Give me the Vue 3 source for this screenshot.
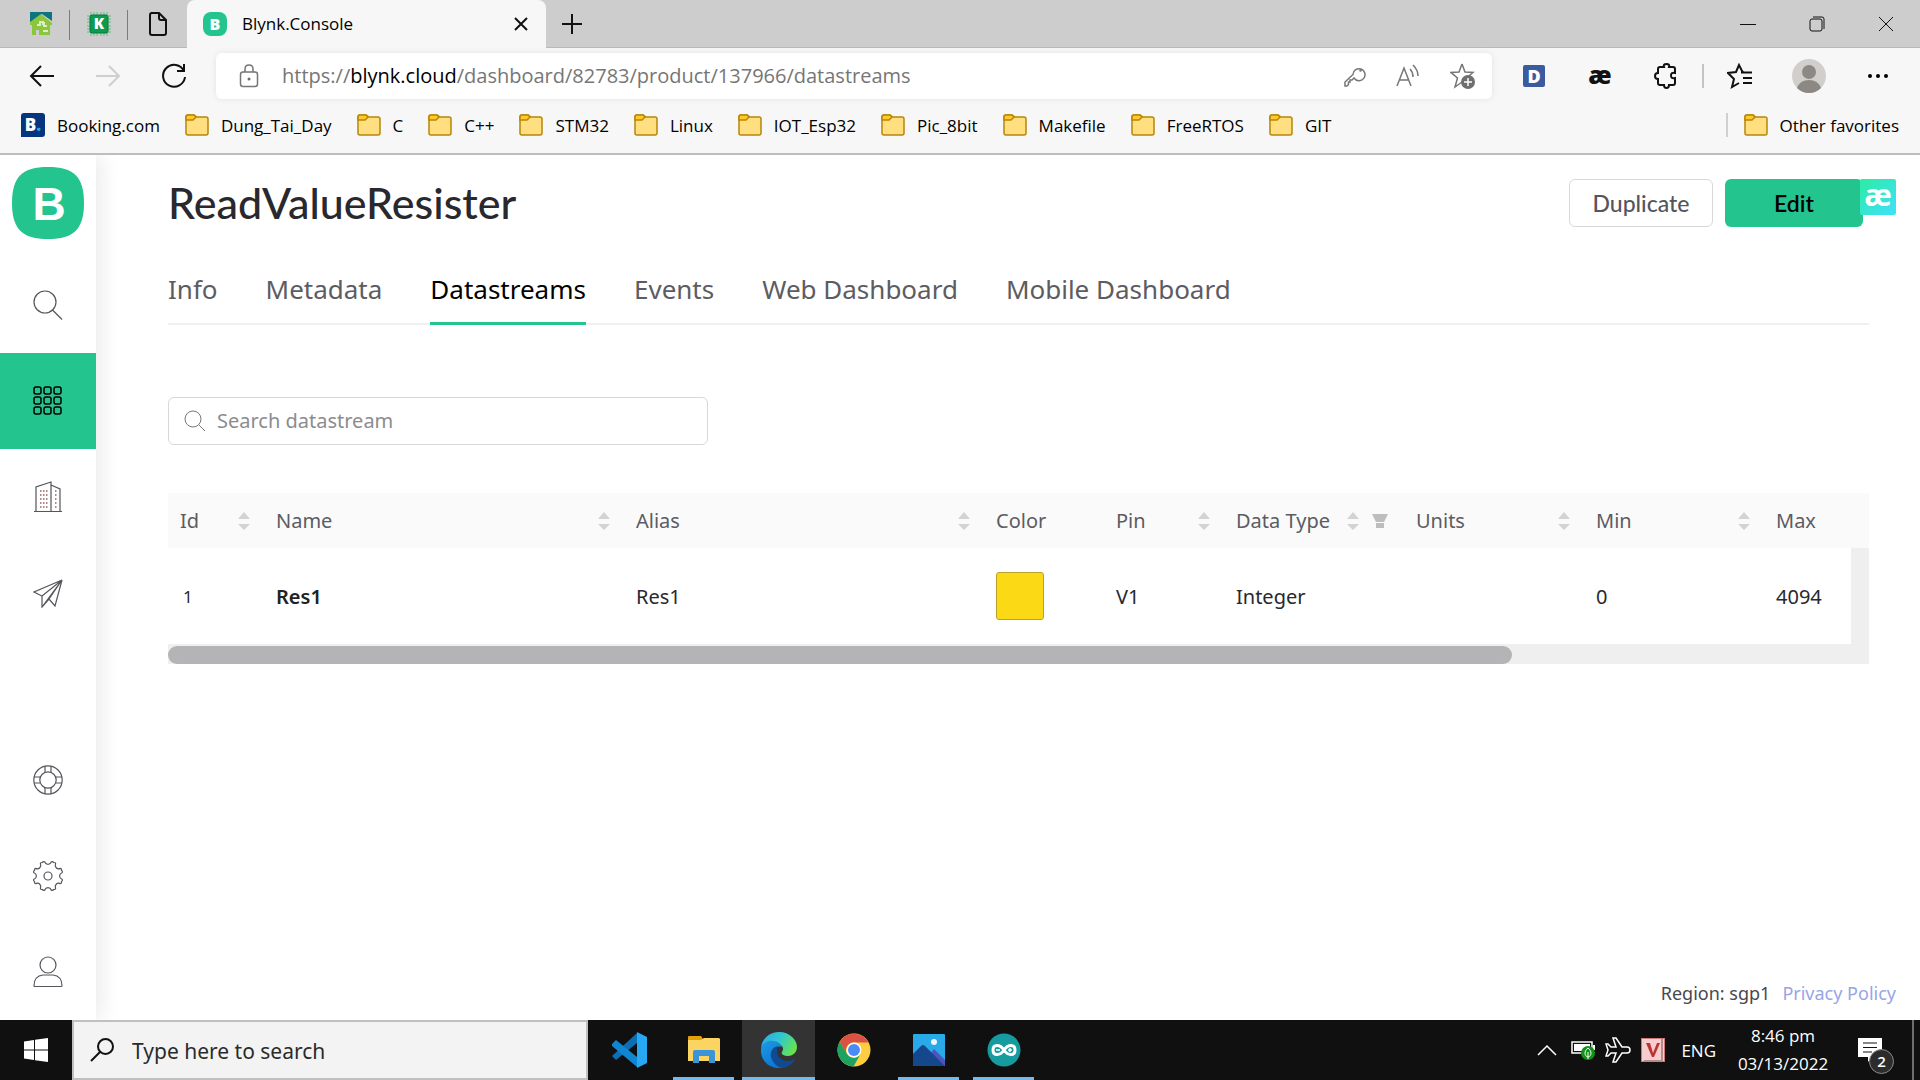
<script setup>
import { ref } from 'vue'

const bookmarks = ['Dung_Tai_Day', 'C', 'C++', 'STM32', 'Linux', 'IOT_Esp32', 'Pic_8bit', 'Makefile', 'FreeRTOS', 'GIT']
const tabs = ['Info', 'Metadata', 'Datastreams', 'Events', 'Web Dashboard', 'Mobile Dashboard']
const activeTab = ref('Datastreams')
const query = ref('')
const taskQuery = ref('')

const columns = [
  { name: 'Id', cls: 'c-id', sort: true },
  { name: 'Name', cls: 'c-wide', sort: true },
  { name: 'Alias', cls: 'c-wide', sort: true },
  { name: 'Color', cls: 'c-small' },
  { name: 'Pin', cls: 'c-small', sort: true },
  { name: 'Data Type', cls: 'c-mid', sort: true, filter: true },
  { name: 'Units', cls: 'c-mid', sort: true },
  { name: 'Min', cls: 'c-mid', sort: true },
  { name: 'Max', cls: 'c-last', span: 2 }
]
const rows = [{ id: 1, name: 'Res1', alias: 'Res1', color: '#fbda15', pin: 'V1', type: 'Integer', units: '', min: 0, max: 4094 }]
const offsets = [0, 10, 20]

// Eight-toothed gear outline, built around the centre of a 32x32 box
const polar = (deg, r) => {
  const a = (deg * Math.PI) / 180
  return `${(16 + r * Math.sin(a)).toFixed(2)} ${(16 - r * Math.cos(a)).toFixed(2)}`
}
const gear = Array.from({ length: 8 }, (_, i) => i * 45)
  .map((a, i) => `${i ? 'L' : 'M'}${polar(a - 13, 14.4)}C${polar(a - 11, 11)} ${polar(a + 11, 11)} ${polar(a + 13, 14.4)}Q${polar(a + 16, 15.6)} ${polar(a + 22.5, 14.6)}Q${polar(a + 29, 15.6)} ${polar(a + 32, 14.4)}`)
  .join('') + 'Z'
</script>

<template>
  <div class="screen">
    <header class="browser">
      <div class="strip">
        <button class="pinned" aria-label="Home site">
          <svg width="22" height="24" viewBox="0 0 22 24"><path d="M0 0h22v9L12 2 0 11z" fill="#0e7480" /><path d="M0 10 11 2l11 9v2h-2v10H9v-5H6v5H2V13H0z" fill="#8cc63f" /><path d="M7 13h3v-3h3v3M13 19h5M14 10v4h3" fill="none" stroke="#d9efc0" stroke-width="2" /></svg>
        </button>
        <button class="pinned" aria-label="K site">
          <svg width="24" height="24" viewBox="0 0 24 24"><path d="M4 0v24M7 0v24M10 0v24M14 0v24M17 0v24M20 0v24M0 4h24M0 7h24M0 10h24M0 14h24M0 17h24M0 20h24" stroke="#5fbf85" stroke-width="1" /><rect x="3" y="3" width="18" height="18" rx="2" fill="#0c9c4c" stroke="#087a3b" /><text x="12" y="17" text-anchor="middle" class="glyph" font-size="15" fill="#fff">K</text></svg>
        </button>
        <button class="pinned last" aria-label="New page">
          <svg width="20" height="26" viewBox="0 0 20 26"><path d="M3 2h8l7 7v13q0 2-2 2H4q-2 0-2-2V4q0-2 2-2M11 2v5q0 2 2 2h5" class="ink" stroke-width="2" /></svg>
        </button>
        <div class="tab">
          <svg width="24" height="24" viewBox="0 0 24 24"><rect width="24" height="24" rx="8" fill="#24c48e" /><text x="12" y="18" text-anchor="middle" class="glyph" font-size="16" fill="#fff">B</text></svg>
          <span class="tab-title">Blynk.Console</span>
          <button class="plain" aria-label="Close tab"><svg width="14" height="14" viewBox="0 0 14 14"><path d="m1 1 12 12M13 1 1 13" class="ink" stroke-width="2" /></svg></button>
        </div>
        <button class="plain new-tab" aria-label="New tab"><svg width="22" height="22" viewBox="0 0 22 22"><path d="M11 1v20M1 11h20" class="ink" stroke-width="2" /></svg></button>
        <div class="window-controls">
          <button aria-label="Minimize"><svg width="16" height="16" viewBox="0 0 16 16"><path d="M0 8.500h16" class="ink" /></svg></button>
          <button aria-label="Restore"><svg width="16" height="16" viewBox="0 0 16 16"><rect x="1" y="3" width="12" height="12" rx="2" class="ink" /><path d="M4 1h9q2 0 2 2v10" class="ink" /></svg></button>
          <button aria-label="Close"><svg width="16" height="16" viewBox="0 0 16 16"><path d="m1 1 14 14M15 1 1 15" class="ink" /></svg></button>
        </div>
      </div>

      <div class="toolbar">
        <button class="tool" aria-label="Back"><svg width="26" height="24" viewBox="0 0 26 24"><path d="M12 2 2 12l10 10M2 12h23" class="ink" stroke-width="2" /></svg></button>
        <button class="tool" aria-label="Forward"><svg width="26" height="24" viewBox="0 0 26 24"><path d="m14 2 10 10-10 10M24 12H1" fill="none" stroke="#cfcfcf" stroke-width="2" /></svg></button>
        <button class="tool" aria-label="Reload"><svg width="26" height="26" viewBox="0 0 26 26"><path d="M23 8A11 11 0 1 0 24 14M23 1v7h-7" class="ink" stroke-width="2" /></svg></button>
        <div class="address">
          <svg width="20" height="24" viewBox="0 0 20 24"><rect x="1.500" y="8" width="17" height="14.500" rx="2.500" class="soft" /><path d="M6 8V5q0-4 4-4t4 4v3" class="soft" /><circle cx="10" cy="15" r="1.500" fill="#6b6b6b" /></svg>
          <div class="url" role="textbox" aria-label="Address">https://<b>blynk.cloud</b>/dashboard/82783/product/137966/datastreams</div>
          <button class="plain" aria-label="Passwords"><svg width="22" height="22" viewBox="0 0 22 22"><path d="M10 13 8 15H6v2H4.500v2.500L3 21H1v-4l8-7.500a6 6 0 1 1 1 3.500z" class="soft" /><circle cx="16.500" cy="5.500" r="1.200" fill="#767676" /></svg></button>
          <button class="plain" aria-label="Read aloud"><svg width="24" height="24" viewBox="0 0 24 24"><path d="M1 22 8 4l7 18M4 16h8M14 5q3 3 3 8M17 1q5 5 5 11" class="soft" /></svg></button>
          <button class="plain" aria-label="Add favorite"><svg width="26" height="26" viewBox="0 0 26 26"><path d="m12 1 3 8 8 .500-6 5M12 1 9 9l-8 .500 6.500 5.500L5 24l7-5" class="soft" /><circle cx="18" cy="19" r="7" fill="#6f6f6f" /><path d="M18 15v8M14 19h8" stroke="#fff" stroke-width="1.500" /></svg></button>
        </div>
        <button class="tool" aria-label="Dictionary"><span class="ext-d">D</span></button>
        <button class="tool" aria-label="Ae extension"><span class="ext-ae">æ</span></button>
        <button class="tool" aria-label="Extensions"><svg width="24" height="26" viewBox="0 0 24 26"><path d="M6 4h4q-1-3 2.500-3T15 4h4q2 0 2 2v4q-4-1-4 2.500t4 2.500v5q0 2-2 2h-4q0 3-2.500 3T10 22H6q-2 0-2-2v-4q-3 0-3-3t3-3V6q0-2 2-2z" class="ink" stroke-width="2" /></svg></button>
        <i class="tool-sep"></i>
        <div class="tool-group">
          <button class="tool" aria-label="Favorites"><svg width="26" height="26" viewBox="0 0 26 26"><path d="m16 9-1-1-3-6-3 7-8 1 6 6-2 8 7-4M14 9.500h11M16 15h9M16 20h9" class="ink" stroke-width="2" /></svg></button>
          <button class="tool" aria-label="Profile"><svg width="34" height="34" viewBox="0 0 34 34"><circle cx="17" cy="17" r="17" fill="#d1cfcb" /><circle cx="17" cy="13" r="7" fill="#8c8985" /><path d="M5 29q3-8 12-8t12 8q-5 5-12 5T5 29z" fill="#8c8985" /></svg></button>
          <button class="tool" aria-label="More"><svg width="22" height="6" viewBox="0 0 22 6"><circle cx="3" cy="3" r="2" /><circle cx="11" cy="3" r="2" /><circle cx="19" cy="3" r="2" /></svg></button>
        </div>
      </div>

      <nav class="bookmarks">
        <a href="#"><svg width="24" height="24" viewBox="0 0 24 24"><path d="M3 0h18q3 0 3 3v18q0 3-3 3H0V3q0-3 3-3z" fill="#06357f" /><text x="12" y="18" text-anchor="middle" class="glyph" font-size="17" fill="#fff">B<tspan fill="#2fa4e7">.</tspan></text></svg>Booking.com</a>
        <a v-for="b in bookmarks" :key="b" href="#"><svg class="folder" width="24" height="24" viewBox="0 0 24 24"><path d="M1 4q0-2 2-2h6l3 2h9q2 0 2 2v14q0 2-2 2H3q-2 0-2-2z" fill="#ffdf80" stroke="#b8860b" stroke-width="1.500" /><path d="M1 4q0-2 2-2h6l2 2-3 3H1z" fill="#ffc928" stroke="#b8860b" stroke-width="1.500" /></svg>{{ b }}</a>
        <a href="#" class="other"><svg class="folder" width="24" height="24" viewBox="0 0 24 24"><path d="M1 4q0-2 2-2h6l3 2h9q2 0 2 2v14q0 2-2 2H3q-2 0-2-2z" fill="#ffdf80" stroke="#b8860b" stroke-width="1.500" /><path d="M1 4q0-2 2-2h6l2 2-3 3H1z" fill="#ffc928" stroke="#b8860b" stroke-width="1.500" /></svg>Other favorites</a>
      </nav>
    </header>

    <div class="page">
      <aside class="sidebar">
        <a href="#" class="logo" aria-label="Blynk"><svg width="72" height="72" viewBox="0 0 72 72"><path d="M36 0C62 0 72 10 72 36S62 72 36 72 0 62 0 36 10 0 36 0z" fill="#24c48e" /><text x="37" y="53" text-anchor="middle" class="logo-letter" font-size="46" fill="#fff">B</text></svg></a>
        <a href="#" class="side" aria-label="Search"><svg width="30" height="30" viewBox="0 0 30 30"><circle cx="12" cy="12" r="11" class="line" /><path d="m19.500 20 9.500 9.500" class="line" /></svg></a>
        <a href="#" class="side active" aria-label="Templates"><svg width="30" height="30" viewBox="0 0 30 30"><template v-for="x in offsets" :key="x"><rect v-for="y in offsets" :key="y" :x="x + 1" :y="y + 1" width="7" height="7" rx="2" fill="none" stroke="#000" stroke-width="1.500" /></template></svg></a>
        <a href="#" class="side" aria-label="Organization"><svg width="30" height="32" viewBox="0 0 30 32"><path d="M1 30.500h28M3 30V6l15-5v29M18 4l9 4v22" class="line" /><path d="M7 10h9M7 14h9M7 18h9M7 22h9M7 26h9M22 10h3M22 14h3M22 18h3M22 22h3M22 26h3" fill="none" stroke="#96615f" stroke-width="1.500" stroke-dasharray="1.500 1.500" /></svg></a>
        <a href="#" class="side" aria-label="Locations"><svg width="30" height="30" viewBox="0 0 30 30"><path d="M29 2 1 14l8 4v11L29 2 9 18M29 2l-7 26-6-7-7 8M16 21 29 2" class="line" /></svg></a>
        <a href="#" class="side push" aria-label="Help"><svg width="30" height="30" viewBox="0 0 30 30"><circle cx="15" cy="15" r="14.200" class="line" /><circle cx="15" cy="15" r="8.200" class="line" /><path d="M12 1v6M18 1v6M12 23v6M18 23v6M1 12h6M1 18h6M23 12h6M23 18h6" class="line" /></svg></a>
        <a href="#" class="side" aria-label="Settings"><svg width="32" height="32" viewBox="0 0 32 32"><path :d="gear" class="line" /><circle cx="16" cy="16" r="4" class="line" /></svg></a>
        <a href="#" class="side" aria-label="Account"><svg width="30" height="32" viewBox="0 0 30 32"><circle cx="15" cy="9" r="8" class="line" /><path d="M1 30q0-10 9-11h10q9 1 9 11 0 .500-1 .500H2q-1 0-1-.500z" class="line" /></svg></a>
      </aside>

      <main class="content">
        <div class="head">
          <h1>ReadValueResister</h1>
          <button class="btn duplicate">Duplicate</button>
          <button class="btn edit">Edit<span class="ae">æ</span></button>
        </div>
        <nav class="tabs">
          <button v-for="t in tabs" :key="t" :class="{ on: t === activeTab }" @click="activeTab = t">{{ t }}</button>
        </nav>
        <label class="search">
          <svg width="22" height="22" viewBox="0 0 22 22"><circle cx="9" cy="9" r="8" class="thin" /><path d="m15 15 6 6" class="thin" /></svg>
          <input v-model="query" type="text" placeholder="Search datastream" aria-label="Search datastream" />
        </label>

        <div class="table-box">
          <table>
            <colgroup><col v-for="c in columns" :key="c.name" :class="c.cls" /><col class="c-gutter" /></colgroup>
            <thead>
              <tr>
                <th v-for="c in columns" :key="c.name" :colspan="c.span || 1">
                  <div class="th">
                    <span>{{ c.name }}</span>
                    <svg v-if="c.sort" class="sorter" width="12" height="18" viewBox="0 0 12 18"><path d="m6 0 6 7H0zM6 18l6-6H0z" fill="#d3d3d3" /></svg>
                    <svg v-if="c.filter" class="filter" width="16" height="16" viewBox="0 0 16 16"><path d="M0 1h16l-4 8H4zM4 10h8v5H4z" fill="#bdbdbd" /></svg>
                  </div>
                </th>
              </tr>
            </thead>
            <tbody>
              <tr v-for="r in rows" :key="r.id">
                <td class="id">{{ r.id }}</td>
                <td class="name">{{ r.name }}</td>
                <td>{{ r.alias }}</td>
                <td><i class="swatch" :style="{ background: r.color }"></i></td>
                <td>{{ r.pin }}</td>
                <td>{{ r.type }}</td>
                <td>{{ r.units }}</td>
                <td>{{ r.min }}</td>
                <td>{{ r.max }}</td>
                <td class="gutter"></td>
              </tr>
            </tbody>
          </table>
          <div class="track"><div class="thumb"></div></div>
        </div>

        <footer class="foot"><span>Region: sgp1</span><a href="#">Privacy Policy</a></footer>
      </main>
    </div>

    <div class="taskbar">
      <button class="start" aria-label="Start"><svg width="24" height="24" viewBox="0 0 24 24"><path d="m0 3.500 10-1.500v9.500H0zM11 1.800 24 0v11.500H11zM0 12.500h10V22L0 20.500zM11 12.500h13V24l-13-1.800z" fill="#fff" /></svg></button>
      <label class="task-search">
        <svg width="24" height="24" viewBox="0 0 24 24"><circle cx="15.500" cy="8.500" r="7.500" class="ink" stroke-width="2" /><path d="M10 14 1 23" class="ink" stroke-width="2" /></svg>
        <input v-model="taskQuery" type="text" placeholder="Type here to search" aria-label="Type here to search" />
      </label>
      <div class="apps">
        <button aria-label="Visual Studio Code"><svg width="36" height="36" viewBox="0 0 36 36"><path d="M1 24 26 1v10L5 28z" fill="#0b6fb5" /><path d="M1 12 5 8l21 17v10L1 14z" fill="#1186d0" /><path d="m26 0 10 5v26l-10 5z" fill="#27a8f2" /></svg></button>
        <button class="open" aria-label="File Explorer"><svg width="32" height="28" viewBox="0 0 32 28"><path d="M0 1q0-1 1-1h12l2 3v6H0z" fill="#e3a008" /><path d="M0 4h13l3-2h15l1 1v22H0z" fill="#fcd462" /><path d="M5 27V16q0-2 2-2h18q2 0 2 2v11h-6v-7H11v7z" fill="#3b93d8" /></svg></button>
        <button class="open current" aria-label="Microsoft Edge"><svg width="36" height="36" viewBox="0 0 36 36">
          <defs>
            <linearGradient id="edgeTop" x1="0" x2="1" y1=".2" y2=".6"><stop offset="0" stop-color="#2ba8ec" /><stop offset=".5" stop-color="#32c9cc" /><stop offset="1" stop-color="#69e34b" /></linearGradient>
            <linearGradient id="edgeSide" x1="0" x2=".6" y1="0" y2="1"><stop offset="0" stop-color="#1e9be2" /><stop offset="1" stop-color="#0a74d4" /></linearGradient>
          </defs>
          <path d="M0 16C1 6 9 0 18 0c11 0 18 8 18 15 0 6-5 9-9 9-5 0-7-2-6-4 3-5-1-8-5-8C9 9 3 10 0 16z" fill="url(#edgeTop)" />
          <path d="M0 17c1-6 7-9 12-8 5 0 8 3 9 6-6-2-10 3-9 8 1 7 6 12 11 13C9 38-1 29 0 17z" fill="url(#edgeSide)" />
          <path d="M17 14c-5 1-8 5-7 11 2 8 9 11 13 11 6-2 10-6 11-9-7 4-18 2-18-9 0-2 0-3 1-4z" fill="#104a91" /></svg></button>
        <button aria-label="Google Chrome"><svg width="34" height="34" viewBox="0 0 34 34"><circle cx="17" cy="17" r="16.500" fill="#ffcd40" /><path d="M2.700 8.800A16.500 16.500 0 0 1 31.500 9.500H17a8 8 0 0 0-7.500 11z" fill="#dd5144" /><path d="M2.700 8.800 10 21a8 8 0 0 0 13 1l-6.500 11.500A16.500 16.500 0 0 1 2.700 8.800z" fill="#1da261" /><circle cx="17" cy="17" r="7.500" fill="#fff" /><circle cx="17" cy="17" r="6" fill="#4c8bf5" /></svg></button>
        <button class="open" aria-label="Photos"><svg width="32" height="32" viewBox="0 0 32 32"><rect width="32" height="32" rx="1" fill="#29a9e8" /><path d="m14 24 7-9 11 11v6H18z" fill="#7286dc" /><path d="m18 19 3-4 11 11v6z" fill="#4a55c0" /><path d="m0 20 8-8q2-2 4 0l20 20H0z" fill="#14478b" /><circle cx="21" cy="8" r="3" fill="#eef8ff" /></svg></button>
        <button class="open" aria-label="Arduino"><svg width="34" height="34" viewBox="0 0 34 34"><circle cx="17" cy="17" r="16.500" fill="#169b9f" /><path d="M17 17C13 11 6 11 6 17s7 6 11 0 11-6 11 0-7 6-11 0z" fill="none" stroke="#fff" stroke-width="3" /><path d="M9 17h4M21 17h4M23 15v4" stroke="#fff" stroke-width="1.500" /></svg></button>
      </div>
      <div class="tray">
        <button class="chevron" aria-label="Hidden icons"><svg width="20" height="12" viewBox="0 0 20 12"><path d="m1 11 9-9 9 9" class="white" /></svg></button>
        <button aria-label="Battery"><svg width="24" height="20" viewBox="0 0 24 20"><rect x="1" y="2" width="20" height="11" class="white" /><path d="M3 4h16v7H3zM22 5h2v5h-2z" fill="#fff" /><circle cx="17" cy="13" r="7" fill="#109318" /><path d="M17 8c4 3 4 8 0 9-4-1-4-6 0-9zm0 4v7" fill="none" stroke="#fff" /></svg></button>
        <button aria-label="Airplane mode"><svg width="26" height="26" viewBox="0 0 26 26"><path d="m8 1 3 0 6 9h5q3 0 3 3t-3 3h-5l-6 9H8l3-9H6l-3 3H1l2-6-2-6h2l3 3h5z" class="white" /></svg></button>
        <button aria-label="Vietnamese keyboard"><svg width="24" height="24" viewBox="0 0 24 24"><rect x=".5" y=".5" width="23" height="23" fill="#f7cdcd" stroke="#d07878" /><path d="M21 1v22H3" stroke="#b98a8a" fill="none" stroke-width="2" /><path d="M5 5h4l3 10 4-10h3l-6 14h-2z" fill="#bb3434" /></svg></button>
        <span class="lang">ENG</span>
        <span class="clock">8:46 pm<br />03/13/2022</span>
        <button class="notes" aria-label="Notifications"><svg width="24" height="24" viewBox="0 0 24 24"><path d="M0 0h24v19H14l-4 5v-5H0z" fill="#fff" /><path d="M5 5h14M5 9.500h14M5 14h9" stroke="#111" /></svg><span class="badge">2</span></button>
      </div>
      <button class="desktop" aria-label="Show desktop"></button>
    </div>
  </div>
</template>

<style>
body { margin: 0; }
</style>

<style scoped>
* { box-sizing: border-box; }
.screen { display: flex; flex-direction: column; min-height: 100vh; background: #fff; font-family: "Open Sans", "Noto Sans", sans-serif; font-size: 17px; color: #000; }
svg { display: block; flex: none; }
button { border: 0; background: none; padding: 0; margin: 0; font: inherit; color: inherit; display: flex; align-items: center; justify-content: center; flex: none; }
a { text-decoration: none; color: inherit; }
.ink { fill: none; stroke: #111; }
.soft { fill: none; stroke: #767676; stroke-width: 1.5; }
.line { fill: none; stroke: #55555c; stroke-width: 1.2; }
.thin { fill: none; stroke: #77777c; stroke-width: 1; }
.white { fill: none; stroke: #fff; stroke-width: 1.5; }
.glyph { font-family: "Open Sans", sans-serif; font-weight: 800; }
.logo-letter { font-family: "Liberation Sans", sans-serif; font-weight: 700; }

.browser { background: #f7f7f7; border-bottom: 2px solid #bdbdbd; }
.strip { display: flex; height: 48px; padding-left: 12px; background: #cdcdcd; box-shadow: inset 0 -1px #b8b8b8; }
.pinned { width: 58px; position: relative; }
.pinned::after { content: ""; position: absolute; right: 0; top: 10px; width: 1px; height: 30px; background: #7b7b7b; }
.pinned.last { width: 59px; }
.pinned.last::after { display: none; }
.tab { display: flex; align-items: center; width: 359px; padding: 0 18px 0 16px; gap: 15px; background: #f7f7f7; border-radius: 8px 8px 0 0; }
.tab-title { flex: 1; padding-bottom: 2px; }
.new-tab { width: 52px; }
.window-controls { display: flex; margin-left: auto; }
.window-controls button { width: 69px; }
.toolbar { display: flex; align-items: center; height: 56px; padding: 0 9px; }
.tool { width: 66px; height: 48px; }
.tool-group { display: flex; gap: 3px; }
.tool-sep { width: 2px; height: 24px; margin: 0 3px; background: #c4c4c4; flex: none; }
.ext-d { width: 22px; height: 22px; border-radius: 2px; background: #3b5ba0; color: #fff; font-size: 18px; line-height: 22px; font-weight: 800; }
.ext-ae { color: #111; font-size: 25px; line-height: 32px; font-weight: 800; padding-bottom: 4px; }
.address { flex: 1; display: flex; align-items: center; height: 46px; margin: 0 9px; padding: 0 16px 0 23px; gap: 30px; background: #fff; border-radius: 6px; box-shadow: 0 0 6px #e4e4e4; }
.url { flex: 1; margin-left: -7px; font-size: 20px; line-height: 28px; color: #767676; white-space: nowrap; }
.url b { font-weight: 400; color: #000; }
.bookmarks { display: flex; align-items: center; height: 49px; padding: 0 21px 7px; gap: 25px; white-space: nowrap; }
.bookmarks a { display: flex; align-items: center; gap: 12px; }
.bookmarks .other { margin-left: auto; padding-left: 16px; border-left: 2px solid #d0d0d0; }

.page { flex: 1; display: flex; }
.sidebar { width: 96px; flex: none; display: flex; flex-direction: column; background: #fff; box-shadow: 6px 0 20px rgba(0, 0, 0, 0.08); clip-path: inset(0 -30px 0 0); }
.logo { padding: 12px 12px 18px; }
.side { height: 96px; flex: none; display: flex; align-items: center; justify-content: center; }
.side.active { background: #24c48e; }
.push { margin-top: auto; }

.content { flex: 1; min-width: 0; display: flex; flex-direction: column; padding: 24px 51px 0 72px; font-family: "Noto Sans", "Open Sans", sans-serif; }
.head { display: flex; align-items: center; height: 48px; gap: 12px; padding-right: 6px; }
h1 { flex: 1; margin: 0; font-family: Lato, sans-serif; font-size: 43px; line-height: 48px; font-weight: 500; color: #28282e; }
.btn { height: 48px; border-radius: 6px; font-family: Lato, sans-serif; font-size: 23px; font-weight: 500; }
.duplicate { width: 144px; border: 1px solid #d8d8d8; color: #55555c; }
.edit { position: relative; width: 138px; background: #24c48e; font-weight: 600; }
.ae { position: absolute; top: 0; right: -33px; width: 36px; height: 36px; border-radius: 2px; background: linear-gradient(135deg, #2ceca0, #40e0ff); color: #fff; font: 700 30px/32px "Open Sans", sans-serif; text-align: center; }
.tabs { display: flex; gap: 48px; height: 68px; margin-top: 30px; box-shadow: inset 0 -2px #f0f0f0; }
.tabs button { font-size: 26px; color: #5c5c62; border-bottom: 3px solid transparent; padding-bottom: 2px; }
.tabs .on { color: #000; border-color: #24c48e; }
.search { display: flex; align-items: center; gap: 11px; width: 540px; height: 48px; margin-top: 72px; padding: 0 15px; border: 1px solid #d8d8d8; border-radius: 6px; }
input { flex: 1; min-width: 0; border: 0; padding: 0; background: none; font: inherit; outline: 0; }
.search input { font-size: 20px; padding-bottom: 2px; }
.search input::placeholder { color: #8c8c90; opacity: 1; }
.table-box { margin-top: 48px; }
table { width: 100%; table-layout: fixed; border-collapse: collapse; font-size: 20px; color: #28282e; }
.c-id { width: 96px; }
.c-wide { width: 360px; }
.c-small { width: 120px; }
.c-mid { width: 180px; }
.c-gutter { width: 18px; }
th { height: 55px; padding: 0 12px; background: #fafafa; font-weight: 400; text-align: left; color: #5c5c62; white-space: nowrap; }
.th { display: flex; align-items: center; gap: 11px; }
.th span { flex: 1; }
.sorter { margin-right: 2px; }
.filter { margin-right: 4px; }
td { height: 96px; padding: 0 12px; }
.id { font-size: 17px; padding-left: 15px; }
.name { font-weight: 600; color: #222; }
.gutter { padding: 0; background: #efefef; }
.swatch { display: block; width: 48px; height: 48px; border: 1px solid #b9a32a; border-radius: 3px; }
.track { height: 20px; padding-top: 2px; background: #efefef; }
.thumb { width: 79%; height: 18px; border-radius: 9px; background: #b4b4b6; }
.foot { display: flex; justify-content: flex-end; gap: 12px; margin: auto -27px 14px 0; font-size: 18px; line-height: 26px; color: #48484e; }
.foot a { color: #97a5e6; }

.taskbar { display: flex; height: 60px; background: #101010; color: #fff; }
.start { width: 72px; }
.task-search { display: flex; align-items: center; gap: 18px; width: 516px; padding: 0 16px; border: 2px solid #c0c0c0; background: #f3f3f3; color: #222; font-family: "Noto Sans", sans-serif; font-size: 21px; }
.task-search input { padding-top: 2px; }
.task-search input::placeholder { color: #2b2b2b; opacity: 1; }
.apps { display: flex; margin-left: 3px; }
.apps button { position: relative; width: 75px; }
.apps .open::after { content: ""; position: absolute; left: 7px; right: 7px; bottom: 0; height: 3px; background: #76b9ed; }
.apps .current { background: #333; background-clip: content-box; padding: 0 1px; }
.apps .current::after { left: 1px; right: 1px; }
.tray { display: flex; align-items: center; margin-left: auto; gap: 10px; }
.chevron { margin-right: 4px; }
.lang { margin: 0 2px 0 6px; }
.clock { width: 110px; text-align: center; line-height: 28px; }
.notes { position: relative; width: 36px; margin: 0 18px 0 10px; justify-content: flex-start; }
.badge { position: absolute; left: 11px; top: 11px; width: 25px; height: 25px; border: 1px solid #8a8a8a; border-radius: 50%; background: #2c2c2c; font: 600 15px/23px "Open Sans", sans-serif; text-align: center; }
.desktop { width: 8px; border-left: 2px solid #6e6e6e; }
</style>
